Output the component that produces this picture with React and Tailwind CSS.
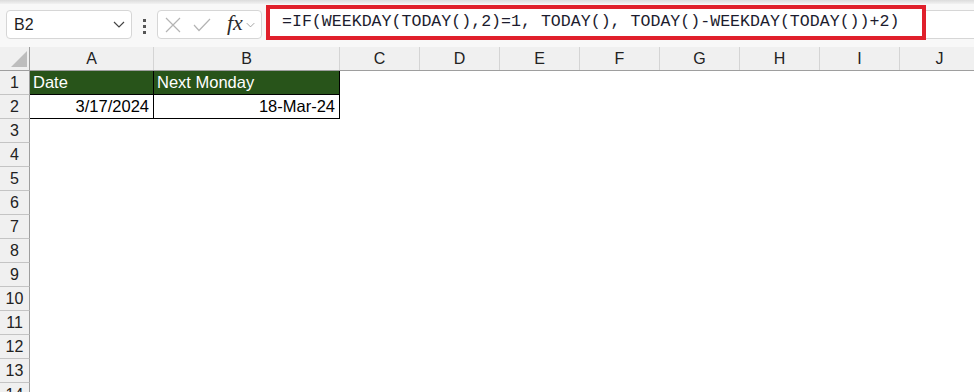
import React from 'react';

const COLS = [
  { name: 'A', w: 'w-[124px]' },
  { name: 'B', w: 'w-[186px]' },
  { name: 'C', w: 'w-[80px]' },
  { name: 'D', w: 'w-[80px]' },
  { name: 'E', w: 'w-[80px]' },
  { name: 'F', w: 'w-[80px]' },
  { name: 'G', w: 'w-[80px]' },
  { name: 'H', w: 'w-[80px]' },
  { name: 'I', w: 'w-[80px]' },
  { name: 'J', w: 'w-[80px]' },
];

const ROWS = Array.from({ length: 14 }, (_, i) => i + 1);

const FORMULA = '=IF(WEEKDAY(TODAY(),2)=1, TODAY(), TODAY()-WEEKDAY(TODAY())+2)';

function Chevron({ className }) {
  return (
    <svg width="12" height="7" viewBox="0 0 12 7" className={className}>
      <path d="M1 1 L6 6 L11 1" fill="none" stroke="currentColor" strokeWidth="1.2" />
    </svg>
  );
}

function FormulaBar() {
  return (
    <div className="h-[43px] flex items-start bg-[#f8f8f8]">
      {/* Name box */}
      <div className="ml-[6px] mt-[6px] w-[126px] h-[29px] bg-white border border-[#d6d6d6] rounded-[4px] flex items-center justify-between pl-[7px] pr-[6px]">
        <span className="text-[16px] text-[#1f1f1f]">B2</span>
        <Chevron className="text-[#444]" />
      </div>

      {/* dots */}
      <div className="ml-[11px] mt-[15px] flex flex-col gap-[3px]">
        <div className="w-[3px] h-[3px] bg-[#555]" />
        <div className="w-[3px] h-[3px] bg-[#555]" />
        <div className="w-[3px] h-[3px] bg-[#555]" />
      </div>

      {/* cancel / enter / fx */}
      <div className="ml-[11px] mt-[6px] w-[105px] h-[29px] bg-white border border-[#d6d6d6] rounded-[4px] flex items-center pl-[7px]">
        <svg width="16" height="16" viewBox="0 0 16 16">
          <path d="M1 1 L15 15 M15 1 L1 15" stroke="#b4b4b4" strokeWidth="1.2" />
        </svg>
        <svg width="18" height="14" viewBox="0 0 18 14" className="ml-[12px]">
          <path d="M1 7 L6 12.5 L17 1" fill="none" stroke="#b4b4b4" strokeWidth="1.2" />
        </svg>
        <span className="ml-[16px] font-['Liberation_Serif'] italic text-[22px] leading-none text-[#2a2a2a] -mt-[3px]">fx</span>
        <Chevron className="ml-[3px] w-[9px] h-[6px] text-[#9a9a9a]" />
      </div>

      {/* formula input */}
      <div className="ml-[4px] mt-[1px] w-[660px] h-[35px] border-[4px] border-[#e0202b] bg-white flex items-center pl-[12px]">
        <span className="font-['Liberation_Mono'] text-[16.6px] text-[#1c1c2e] whitespace-nowrap">{FORMULA}</span>
      </div>
      <div className="flex-1 mt-[6px] h-[29px] bg-white border-y border-[#d6d6d6]" />
    </div>
  );
}

function ColumnHeader() {
  return (
    <div className="h-[24px] flex bg-[#f0f0f0] border-b border-[#9e9e9e]">
      <div className="w-[30px] shrink-0 border-r border-[#9e9e9e] relative">
        <svg width="16" height="16" viewBox="0 0 16 16" className="absolute left-[11px] bottom-[3px]">
          <path d="M16 0 L16 16 L0 16 Z" fill="#bdbdbd" />
        </svg>
      </div>
      {COLS.map(c => (
        <div key={c.name} className={`${c.w} shrink-0 border-r border-[#d4d4d4] flex items-center justify-center pt-[1px] text-[16px] text-[#222]`}>
          {c.name}
        </div>
      ))}
    </div>
  );
}

function Row({ n }) {
  return (
    <div className="h-[24px] flex">
      <div className="w-[30px] shrink-0 bg-[#f0f0f0] border-r border-b border-r-[#9e9e9e] border-b-[#c4c4c4] flex items-center justify-center text-[16px] text-[#222]">
        {n}
      </div>
      {n === 1 && (
        <>
          <div className="w-[124px] shrink-0 bg-[#28541a] border-r border-b border-black flex items-center pl-[3px] text-[16.5px] text-white">Date</div>
          <div className="w-[186px] shrink-0 bg-[#28541a] border-r border-b border-black flex items-center pl-[3px] text-[16.5px] text-white">Next Monday</div>
        </>
      )}
      {n === 2 && (
        <>
          <div className="w-[124px] shrink-0 border-r border-b border-black flex items-center justify-end pr-[4px] text-[16.5px] text-black">3/17/2024</div>
          <div className="w-[186px] shrink-0 border-r border-b border-black flex items-center justify-end pr-[4px] text-[16.5px] text-black">18-Mar-24</div>
        </>
      )}
    </div>
  );
}

export default function App() {
  return (
    <div className="w-[974px] h-[392px] overflow-hidden bg-white font-['Liberation_Sans',sans-serif]">
      <div className="h-[4px] bg-gradient-to-b from-[#dcdcdc] to-[#f2f2f2]" />
      <FormulaBar />
      <ColumnHeader />
      {ROWS.map(n => <Row key={n} n={n} />)}
    </div>
  );
}
